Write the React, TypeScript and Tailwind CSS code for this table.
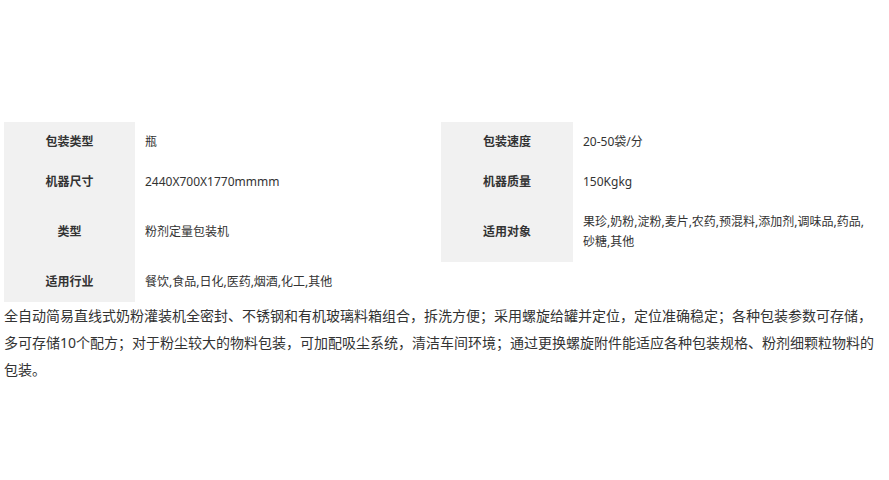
const rows: { label: string; value: string; label2?: string; value2?: string }[] = [
  { label: "包装类型", value: "瓶", label2: "包装速度", value2: "20-50袋/分" },
  { label: "机器尺寸", value: "2440X700X1770mmmm", label2: "机器质量", value2: "150Kgkg" },
  {
    label: "类型",
    value: "粉剂定量包装机",
    label2: "适用对象",
    value2: "果珍,奶粉,淀粉,麦片,农药,预混料,添加剂,调味品,药品,砂糖,其他",
  },
  { label: "适用行业", value: "餐饮,食品,日化,医药,烟酒,化工,其他" },
];

const Label = ({ text }: { text: string }) => (
  <div className="flex items-center justify-center bg-[#f1f1f1] px-[10px] py-[10px] font-bold text-[#333]">
    {text}
  </div>
);

const Value = ({ text }: { text: string }) => (
  <div className="flex items-center px-[10px] py-[10px] text-[#333]">
    <span>{text}</span>
  </div>
);

export default function App() {
  return (
    <div
      className="min-h-[480px] bg-white pt-[122px] px-[4px]"
      style={{ fontFamily: '"Noto Sans", "Noto Sans CJK SC", sans-serif' }}
    >
      <div className="w-[881px]">
        <div className="grid grid-cols-[131px_306px_132px_312px] text-[12px] leading-[20px]">
          {rows.map((r) => (
            <div key={r.label} className="contents">
              <Label text={r.label} />
              <Value text={r.value} />
              {r.label2 && <Label text={r.label2} />}
              {r.value2 && <Value text={r.value2} />}
            </div>
          ))}
        </div>
        <p className="text-[14px] leading-[27px] text-[#333]">
          全自动简易直线式奶粉灌装机全密封、不锈钢和有机玻璃料箱组合，拆洗方便；采用螺旋给罐并定位，定位准确稳定；各种包装参数可存储，多可存储10个配方；对于粉尘较大的物料包装，可加配吸尘系统，清洁车间环境；通过更换螺旋附件能适应各种包装规格、粉剂细颗粒物料的包装。
        </p>
      </div>
    </div>
  );
}
